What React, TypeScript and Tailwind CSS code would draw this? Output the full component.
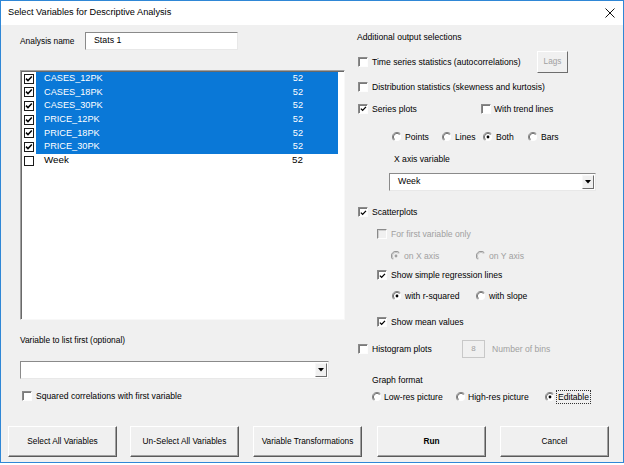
import React from 'react';

const font = "font-['Liberation_Sans',Arial,sans-serif]";

interface BoxProps {
  checked?: boolean;
  disabled?: boolean;
}

// Classic 3D checkbox
function CheckBox({ checked, disabled }: BoxProps) {
  return (
    <span
      className={`relative inline-flex items-center justify-center w-[10px] h-[10px] shrink-0 border border-t-[#8a8a8a] border-l-[#8a8a8a] border-r-[#fdfdfd] border-b-[#fdfdfd] ${
        disabled ? 'bg-[#f0f0f0] shadow-[inset_1px_1px_0_#d0d0d0]' : 'bg-white shadow-[inset_1px_1px_0_#7a7a7a]'
      }`}
    >
      {checked && (
        <svg width="8" height="8" viewBox="0 0 8 8" className="ml-[1px] mt-[1px]">
          <polyline points="1,3.6 3,5.6 6.8,1.6" fill="none" stroke={disabled ? '#a0a0a0' : '#000'} strokeWidth="1.5" />
        </svg>
      )}
    </span>
  );
}

function Radio({ checked, disabled }: BoxProps) {
  return (
    <svg width="10" height="10" viewBox="0 0 10 10" className="shrink-0">
      <circle cx="5" cy="5" r="4" fill={disabled ? '#f0f0f0' : '#fff'} />
      <path d="M8.3 1.7 A4.6 4.6 0 0 0 1.7 8.3" fill="none" stroke="#8a8a8a" strokeWidth="1" />
      <path d="M7.6 2.4 A3.6 3.6 0 0 0 2.4 7.6" fill="none" stroke={disabled ? '#c0c0c0' : '#606060'} strokeWidth="1" />
      {checked && <circle cx="5" cy="5" r="1.4" fill={disabled ? '#a0a0a0' : '#000'} />}
    </svg>
  );
}

function DropArrow() {
  return (
    <span className="flex items-center justify-center w-[12px] h-[14px] bg-[#f0f0f0] border border-t-[#f8f8f8] border-l-[#f8f8f8] border-r-[#6d6d6d] border-b-[#6d6d6d]">
      <svg width="6" height="4" viewBox="0 0 6 4">
        <polygon points="0,0 6,0 3,3.5" fill="#000" />
      </svg>
    </span>
  );
}

const variables = [
  { name: 'CASES_12PK', sel: true },
  { name: 'CASES_18PK', sel: true },
  { name: 'CASES_30PK', sel: true },
  { name: 'PRICE_12PK', sel: true },
  { name: 'PRICE_18PK', sel: true },
  { name: 'PRICE_30PK', sel: true },
  { name: 'Week', sel: false },
];

function DialogButton({ label, bold, className }: { label: string; bold?: boolean; className?: string }) {
  return (
    <button
      className={`w-[109px] h-[31px] bg-[#f0f0f0] border border-t-white border-l-white border-r-[#5a5a5a] border-b-[#5a5a5a] shadow-[inset_-1px_-1px_0_#a0a0a0] text-[8.3px] text-black ${
        bold ? 'font-bold' : ''
      } ${className ?? ''}`}
    >
      {label}
    </button>
  );
}

export default function App() {
  return (
    <div className={`w-[624px] h-[463px] border border-[#2f87d6] bg-[#f0f0f0] flex flex-col text-[8.6px] text-black select-none ${font}`}>
      {/* Title bar */}
      <div className="h-[24px] bg-white flex items-center justify-between pl-[7px] pr-[7px]">
        <span className="text-[9.2px]">Select Variables for Descriptive Analysis</span>
        <svg width="10" height="10" viewBox="0 0 10 10" className="mr-[1px]">
          <path d="M0.5 0.5 L9.5 9.5 M9.5 0.5 L0.5 9.5" stroke="#111" strokeWidth="1" />
        </svg>
      </div>

      {/* Body */}
      <div className="flex h-[401px]">
        {/* Left column */}
        <div className="pl-[19px] w-[344px] flex flex-col">
          <div className="mt-[7px] h-[18px] flex items-center">
            <span className="w-[65px] text-[8.4px]">Analysis name</span>
            <div className="w-[153px] h-[18px] bg-white border border-t-[#8a8a8a] border-l-[#8a8a8a] border-r-[#e8e8e8] border-b-[#e8e8e8] flex items-center pl-[8px] text-[8.8px]">
              Stats 1
            </div>
          </div>

          <div className="mt-[20px] w-[325px] h-[250px] bg-white border border-t-[#a0a0a0] border-l-[#a0a0a0] border-r-[#f8f8f8] border-b-[#f8f8f8] shadow-[inset_1px_1px_0_#696969] pt-[1px] pl-[2px] flex flex-col">
            {variables.map((v) => (
              <div key={v.name} className="h-[13.67px] flex items-center">
                <span className="w-[10px] h-[10px] ml-[1px] border border-[#1a1a1a] bg-white flex items-center justify-center shrink-0">
                  {v.sel && (
                    <svg width="8" height="8" viewBox="0 0 8 8">
                      <polyline points="1,3.6 3,5.6 6.8,1.6" fill="none" stroke="#000" strokeWidth="1.5" />
                    </svg>
                  )}
                </span>
                <div
                  className={`ml-[2px] w-[302px] h-full flex items-center justify-between pl-[8px] pr-[35px] ${
                    v.sel ? 'bg-[#0a78d7] text-white text-[9.2px]' : 'text-black text-[9.8px]'
                  }`}
                >
                  <span>{v.name}</span>
                  <span>52</span>
                </div>
              </div>
            ))}
          </div>

          <div className="mt-[12px] h-[16px] flex items-center text-[8.4px]">Variable to list first (optional)</div>

          <div className="mt-[13px] w-[309px] h-[18px] bg-white border border-t-[#8a8a8a] border-l-[#8a8a8a] border-r-[#e8e8e8] border-b-[#e8e8e8] flex items-center justify-end pr-[1px]">
            <DropArrow />
          </div>

          <div className="mt-[9px] h-[16px] flex items-center gap-[4px] pl-[2px]">
            <CheckBox />
            <span>Squared correlations with first variable</span>
          </div>
        </div>

        {/* Right column */}
        <div className="ml-[12px] flex flex-col">
          <div className="mt-[4px] h-[16px] flex items-center">Additional output selections</div>

          <div className="mt-[6px] h-[22px] w-[211px] flex items-center justify-between pl-[1px]">
            <div className="flex items-center gap-[4px]">
              <CheckBox />
              <span>Time series statistics (autocorrelations)</span>
            </div>
            <button className="w-[31px] h-[22px] bg-[#f0f0f0] border border-t-white border-l-white border-r-[#6d6d6d] border-b-[#6d6d6d] text-[8.2px] text-[#a0a0a0]">
              Lags
            </button>
          </div>

          <div className="mt-[6px] h-[16px] flex items-center gap-[4px] pl-[1px]">
            <CheckBox />
            <span>Distribution statistics (skewness and kurtosis)</span>
          </div>

          <div className="mt-[6px] h-[16px] flex items-center pl-[1px]">
            <div className="w-[123px] flex items-center gap-[4px]">
              <CheckBox checked />
              <span>Series plots</span>
            </div>
            <div className="flex items-center gap-[3px]">
              <CheckBox />
              <span>With trend lines</span>
            </div>
          </div>

          <div className="mt-[12px] h-[16px] flex items-center pl-[35px]">
            <div className="w-[50px] flex items-center gap-[3px]">
              <Radio />
              <span>Points</span>
            </div>
            <div className="w-[41px] flex items-center gap-[3px]">
              <Radio />
              <span>Lines</span>
            </div>
            <div className="w-[45px] flex items-center gap-[3px]">
              <Radio checked />
              <span>Both</span>
            </div>
            <div className="flex items-center gap-[3px]">
              <Radio />
              <span>Bars</span>
            </div>
          </div>

          <div className="mt-[6px] h-[16px] flex items-center pl-[37px]">X axis variable</div>

          <div className="mt-[6px] ml-[32px] w-[207px] h-[18px] bg-white border border-t-[#8a8a8a] border-l-[#8a8a8a] border-r-[#e8e8e8] border-b-[#e8e8e8] flex items-center justify-between pl-[8px] pr-[1px]">
            <span className="text-[8.8px]">Week</span>
            <DropArrow />
          </div>

          <div className="mt-[13px] h-[16px] flex items-center gap-[4px] pl-[1px]">
            <CheckBox checked />
            <span>Scatterplots</span>
          </div>

          <div className="mt-[6px] h-[16px] flex items-center gap-[4px] pl-[20px] text-[#a0a0a0]">
            <CheckBox disabled />
            <span>For first variable only</span>
          </div>

          <div className="mt-[6px] h-[16px] flex items-center pl-[34px] text-[#a0a0a0]">
            <div className="w-[85px] flex items-center gap-[3px]">
              <Radio checked disabled />
              <span>on X axis</span>
            </div>
            <div className="flex items-center gap-[3px]">
              <Radio disabled />
              <span>on Y axis</span>
            </div>
          </div>

          <div className="mt-[3px] h-[16px] flex items-center gap-[4px] pl-[20px]">
            <CheckBox checked />
            <span>Show simple regression lines</span>
          </div>

          <div className="mt-[5px] h-[16px] flex items-center pl-[35px]">
            <div className="w-[84px] flex items-center gap-[3px]">
              <Radio checked />
              <span>with r-squared</span>
            </div>
            <div className="flex items-center gap-[3px]">
              <Radio />
              <span>with slope</span>
            </div>
          </div>

          <div className="mt-[10px] h-[16px] flex items-center gap-[4px] pl-[20px]">
            <CheckBox checked />
            <span>Show mean values</span>
          </div>

          <div className="mt-[10px] h-[18px] flex items-center pl-[1px]">
            <div className="w-[104px] flex items-center gap-[4px]">
              <CheckBox />
              <span>Histogram plots</span>
            </div>
            <div className="w-[23px] h-[18px] bg-[#f0f0f0] border border-[#c8c8c8] flex items-center justify-center text-[8px] text-[#a0a0a0]">
              8
            </div>
            <span className="ml-[7px] text-[#a0a0a0]">Number of bins</span>
          </div>

          <div className="mt-[14px] h-[16px] flex items-center pl-[15px]">Graph format</div>

          <div className="mt-[1px] h-[16px] flex items-center pl-[15px]">
            <div className="w-[84px] flex items-center gap-[2px]">
              <Radio />
              <span>Low-res picture</span>
            </div>
            <div className="w-[89px] flex items-center gap-[2px]">
              <Radio />
              <span>High-res picture</span>
            </div>
            <div className="flex items-center gap-[1px]">
              <Radio checked />
              <span className="border border-dotted border-[#333] px-[1px] leading-[12px]">Editable</span>
            </div>
          </div>
        </div>
      </div>

      {/* Buttons */}
      <div className="h-[31px] flex pl-[7px]">
        <DialogButton label="Select All Variables" />
        <DialogButton label="Un-Select All Variables" className="ml-[13px]" />
        <DialogButton label="Variable Transformations" className="ml-[14px]" />
        <DialogButton label="Run" bold className="ml-[15px]" />
        <DialogButton label="Cancel" className="ml-[14px]" />
      </div>
    </div>
  );
}
